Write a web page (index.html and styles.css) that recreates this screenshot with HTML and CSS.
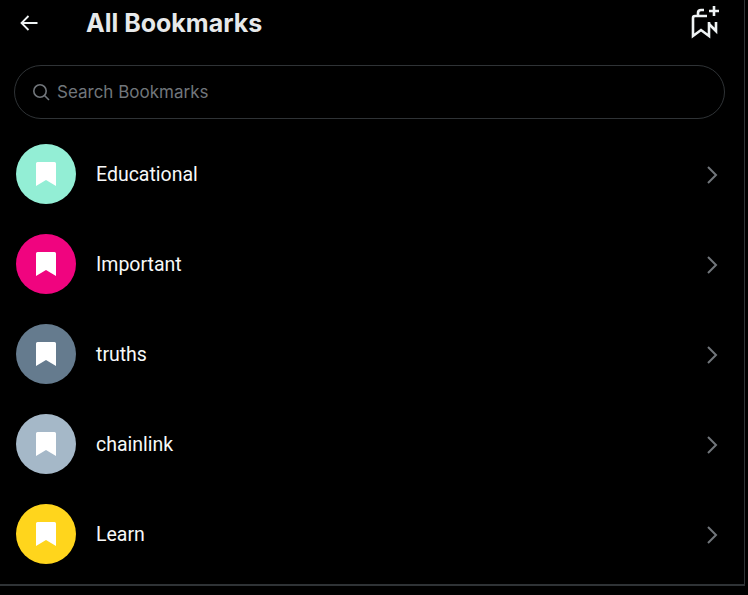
FILE: index.html
```html
<!DOCTYPE html>
<html lang="en">
<head>
    <meta charset="UTF-8">
    <title>All Bookmarks</title>
    <link rel="stylesheet" href="styles.css">
</head>
<body>
    <div class="panel">
        <div class="header">
            <svg class="back-icon" viewBox="0 0 20 20" width="20" height="20">
                <path d="M18.500 10H2.500M9.500 3L2.500 10L9.500 17" fill="none" stroke="#eff3f4" stroke-width="1.800"/>
            </svg>
            <h1>All Bookmarks</h1>
            <svg class="add-icon" viewBox="0 0 32 34" width="32" height="34">
                <path d="M17 10H5Q3 10 3 12V30L11 24L19 30V16" fill="none" stroke="#eff3f4" stroke-width="2.600"/>
                <path d="M8 10V7Q8 4 11 4H14" fill="none" stroke="#eff3f4" stroke-width="2.600"/>
                <path d="M19 18L26 25V16" fill="none" stroke="#eff3f4" stroke-width="2.600"/>
                <path d="M24 0V10M19 5H29" fill="none" stroke="#eff3f4" stroke-width="2.600"/>
            </svg>
        </div>

        <div class="search">
            <svg viewBox="0 0 18 18" width="18" height="18">
                <circle cx="8" cy="8" r="6.200" fill="none" stroke="#71767b" stroke-width="1.600"/>
                <path d="M12.500 12.500L17 17" fill="none" stroke="#71767b" stroke-width="1.600"/>
            </svg>
            <span>Search Bookmarks</span>
        </div>

        <div class="folder">
            <div class="folder-icon mint"><svg viewBox="0 0 20 24" width="20" height="24"><path class="ribbon" d="M1.500 0H18.500Q20 0 20 1.500V24L10 18L0 24V1.500Q0 0 1.500 0Z"/></svg></div>
            <span class="folder-name">Educational</span>
            <svg class="chevron" viewBox="0 0 12 18" width="12" height="18"><path d="M2 1L10 9L2 17" fill="none" stroke="#71767b" stroke-width="2"/></svg>
        </div>
        <div class="folder">
            <div class="folder-icon pink"><svg viewBox="0 0 20 24" width="20" height="24"><path class="ribbon" d="M1.500 0H18.500Q20 0 20 1.500V24L10 18L0 24V1.500Q0 0 1.500 0Z"/></svg></div>
            <span class="folder-name">Important</span>
            <svg class="chevron" viewBox="0 0 12 18" width="12" height="18"><path d="M2 1L10 9L2 17" fill="none" stroke="#71767b" stroke-width="2"/></svg>
        </div>
        <div class="folder">
            <div class="folder-icon slate"><svg viewBox="0 0 20 24" width="20" height="24"><path class="ribbon" d="M1.500 0H18.500Q20 0 20 1.500V24L10 18L0 24V1.500Q0 0 1.500 0Z"/></svg></div>
            <span class="folder-name">truths</span>
            <svg class="chevron" viewBox="0 0 12 18" width="12" height="18"><path d="M2 1L10 9L2 17" fill="none" stroke="#71767b" stroke-width="2"/></svg>
        </div>
        <div class="folder">
            <div class="folder-icon grey"><svg viewBox="0 0 20 24" width="20" height="24"><path class="ribbon" d="M1.500 0H18.500Q20 0 20 1.500V24L10 18L0 24V1.500Q0 0 1.500 0Z"/></svg></div>
            <span class="folder-name">chainlink</span>
            <svg class="chevron" viewBox="0 0 12 18" width="12" height="18"><path d="M2 1L10 9L2 17" fill="none" stroke="#71767b" stroke-width="2"/></svg>
        </div>
        <div class="folder">
            <div class="folder-icon yellow"><svg viewBox="0 0 20 24" width="20" height="24"><path class="ribbon" d="M1.500 0H18.500Q20 0 20 1.500V24L10 18L0 24V1.500Q0 0 1.500 0Z"/></svg></div>
            <span class="folder-name">Learn</span>
            <svg class="chevron" viewBox="0 0 12 18" width="12" height="18"><path d="M2 1L10 9L2 17" fill="none" stroke="#71767b" stroke-width="2"/></svg>
        </div>
    </div>
</body>
</html>
```

FILE: styles.css
```css
html, body {
    margin: 0;
    height: 100%;
    background-color: #000;
    overflow: hidden;
}
body {
    font-family: Inter, Roboto, sans-serif;
    color: #eff3f4;
}
.panel {
    box-sizing: border-box;
    width: 745px;
    height: 586px;
    border-right: 1px solid #2f3336;
    border-bottom: 2px solid #2f3336;
}
.header {
    display: flex;
    align-items: center;
    height: 46px;
    padding: 0 22px 0 19px;
}
.back-icon {
    margin-right: 47px;
}
h1 {
    flex: 1;
    margin: 0;
    font-size: 25px;
    font-weight: 700;
    color: #e7e9ea;
}
.add-icon {
    display: block;
}
.search {
    display: flex;
    align-items: center;
    gap: 7px;
    box-sizing: border-box;
    width: 711px;
    height: 54px;
    margin: 19px 0 0 14px;
    padding-left: 17px;
    border: 1px solid #2f3336;
    border-radius: 27px;
    font-size: 17px;
    color: #71767b;
}
.folder {
    display: flex;
    align-items: center;
    height: 90px;
    padding: 0 26px 0 16px;
}
.search + .folder {
    margin-top: 10px;
}
.folder-icon {
    display: flex;
    align-items: center;
    justify-content: center;
    width: 60px;
    height: 60px;
    border-radius: 50%;
    margin-right: 20px;
}
.ribbon {
    fill: #fff;
}
.folder-name {
    flex: 1;
    padding-top: 1px;
    font-family: Roboto, sans-serif;
    font-size: 19.5px;
    color: #f7f9f9;
}
.chevron {
    margin-top: 1px;
}
.mint { background-color: #93eed5; }
.pink { background-color: #f0047f; }
.slate { background-color: #657b8e; }
.grey { background-color: #a5b8c8; }
.yellow { background-color: #ffd51c; }
```
